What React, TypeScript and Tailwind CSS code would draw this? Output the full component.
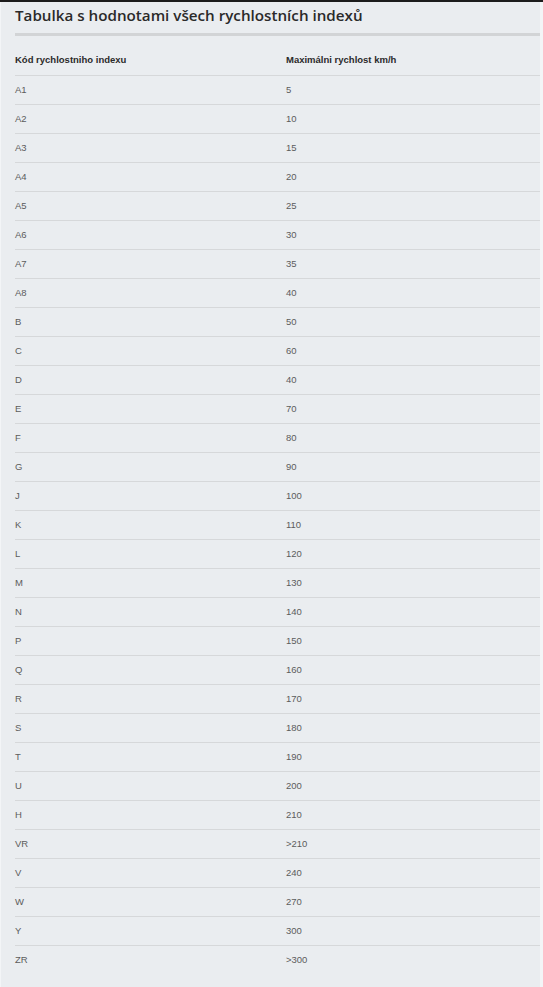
import React from "react";

const rows: [string, string][] = [
  ["A1", "5"], ["A2", "10"], ["A3", "15"], ["A4", "20"], ["A5", "25"], ["A6", "30"],
  ["A7", "35"], ["A8", "40"], ["B", "50"], ["C", "60"], ["D", "40"], ["E", "70"],
  ["F", "80"], ["G", "90"], ["J", "100"], ["K", "110"], ["L", "120"], ["M", "130"],
  ["N", "140"], ["P", "150"], ["Q", "160"], ["R", "170"], ["S", "180"], ["T", "190"],
  ["U", "200"], ["H", "210"], ["VR", ">210"], ["V", "240"], ["W", "270"], ["Y", "300"],
  ["ZR", ">300"],
];

export default function App() {
  return (
    <div className="w-[543px] h-[987px] bg-[#1c1c1c] pt-[2px] overflow-hidden">
      <div className="flex h-[985px]">
        <div className="w-[1px] bg-[#f3f5f7]" />
        <div className="w-[539px] bg-[#eaedf0] pl-[14px]">
          <h1
            className="h-[31px] pt-[2px] text-[15.2px] font-semibold text-[#2a2a2a] leading-[22px]"
            style={{ fontFamily: '"Open Sans", "Noto Sans", sans-serif' }}
          >
            Tabulka s hodnotami všech rychlostních indexů
          </h1>
          <div className="h-[3px] bg-[#d2d4d6]" />
          <div style={{ fontFamily: '"Liberation Sans", Arial, sans-serif' }}>
            <div className="flex h-[39px] pt-[16px] text-[9.5px] font-bold text-[#2a2a2a] leading-[16px]">
              <div className="w-[271px]">Kód rychlostniho indexu</div>
              <div>Maximálni rychlost km/h</div>
            </div>
            {rows.map(([k, v], i) => (
              <div
                key={i}
                className="flex h-[29px] border-t border-[#d6d8da] items-center text-[9.5px] text-[#5c5c5c]"
              >
                <div className="w-[271px]">{k}</div>
                <div>{v}</div>
              </div>
            ))}
          </div>
        </div>
        <div className="w-[3px] bg-[#f3f5f7]" />
      </div>
    </div>
  );
}
